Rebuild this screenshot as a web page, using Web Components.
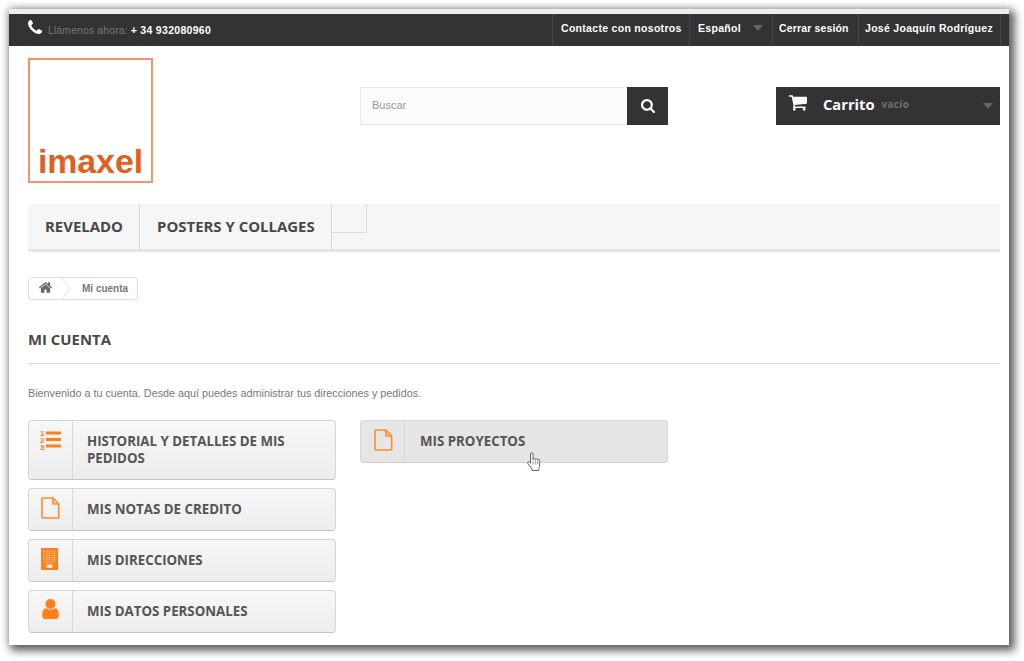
<!DOCTYPE html>
<html lang="es">
<head>
<meta charset="utf-8">
<title>Mi cuenta</title>
<style>
    html, body { margin: 0; background: #fff; }
    body { height: 661px; overflow: hidden; padding: 9px; box-sizing: border-box; font-family: "Liberation Sans", Arial, sans-serif; }
    .col { display: flex; flex-direction: column; gap: 8px; }
</style>
</head>
<body>
<shop-window>
    <top-bar></top-bar>
    <shop-header></shop-header>
    <main-menu></main-menu>
    <bread-crumb></bread-crumb>
    <page-heading>Mi cuenta</page-heading>
    <intro-text>Bienvenido a tu cuenta. Desde aquí puedes administrar tus direcciones y pedidos.</intro-text>
    <account-grid>
        <div class="col">
            <account-link icon="list" tall>Historial y detalles de mis pedidos</account-link>
            <account-link icon="file">Mis notas de credito</account-link>
            <account-link icon="building">Mis direcciones</account-link>
            <account-link icon="user">Mis datos personales</account-link>
        </div>
        <div class="col">
            <account-link icon="file" hover>Mis proyectos</account-link>
        </div>
    </account-grid>
</shop-window>

<script>
// grille de petits carres pour l'icone immeuble
let dots = ''
for (let r = 0; r < 6; r++) {
    for (let c = 0; c < 5; c++) {
        dots += `M${2.4 + c * 2.6} ${2.5 + r * 2.2}h1.400v1.300h-1.400z`
    }
}

const ICONS = {
    phone: `<svg viewBox="0 0 1408 1408" width="14" height="14"><path fill="#fff" d="M1408 1112q0 27-10 70.500t-21 68.500q-21 50-122 106-94 51-186 51-27 0-53-3.500t-57.500-12.500-47-14.500-55.500-20.500-49-18q-98-35-175-83-127-79-264-216t-216-264q-48-77-83-175-3-9-18-49t-20.500-55.500-14.500-47-12.500-57.500-3.500-53q0-92 51-186 56-101 106-122 25-11 68.500-21t70.500-10q14 0 21 3 18 6 53 76 11 19 30 54t35 63.500 31 53.500q3 4 17.500 25t21.500 35.500 7 28.500q0 20-28.500 50t-62 55-62 53-28.500 46q0 9 5 22.500t8.500 20.500 14 24 11.500 19q76 137 174 235t235 174q2 1 19 11.500t24 14 20.500 8.500 22.500 5q18 0 46-28.500t53-62 55-62 50-28.500q14 0 28.500 7t35.500 21.500 25 17.500q25 15 53.500 31t63.500 35 54 30q70 35 76 53 3 7 3 21z"/></svg>`,
    search: `<svg viewBox="64 128 1664 1664" width="14" height="14"><path fill="#fff" d="M1216 832q0-185-131.500-316.500t-316.500-131.500-316.500 131.500-131.500 316.500 131.500 316.500 316.500 131.500 316.500-131.500 131.500-316.500zm512 832q0 52-38 90t-90 38q-54 0-90-38l-343-342q-179 124-399 124-143 0-273.500-55.500t-225-150-150-225-55.500-273.500 55.500-273.500 150-225 225-150 273.500-55.500 273.500 55.500 225 150 150 225 55.500 273.500q0 220-124 399l343 343q37 37 37 90z"/></svg>`,
    cart: `<svg viewBox="0 256 1728 1408" width="19" height="16"><path fill="#fff" d="M704 1536q0 52-38 90t-90 38-90-38-38-90 38-90 90-38 90 38 38 90zm896 0q0 52-38 90t-90 38-90-38-38-90 38-90 90-38 90 38 38 90zm128-1088v512q0 24-16.500 42.500t-40.500 21.500l-1044 122q13 60 13 70 0 16-24 64h920q26 0 45 19t19 45-19 45-45 19h-1024q-26 0-45-19t-19-45q0-11 8-31.500t16-36 21.500-40 15.500-29.500l-177-823h-204q-26 0-45-19t-19-45 19-45 45-19h256q16 0 28.500 6.500t19.500 15.500 13 24.500 8 26 5.500 29.500 4.500 26h1201q26 0 45 19t19 45z"/></svg>`,
    home: `<svg viewBox="90 256 1610 1280" width="13" height="11"><path fill="#666" d="M1472 992v480q0 26-19 45t-45 19h-384v-384h-256v384h-384q-26 0-45-19t-19-45v-480q0-1 .5-3t.5-3l575-474 575 474q1 2 1 6zm223-69l-62 74q-8 9-21 11h-3q-13 0-21-7l-692-577-692 577q-12 8-24 7-13-2-21-11l-62-74q-8-10-7-23.500t11-21.500l719-599q32-26 76-26t76 26l244 204v-195q0-14 9-23t23-9h192q14 0 23 9t9 23v408l219 182q10 8 11 21.500t-7 23.500z"/></svg>`,
    list: `<svg viewBox="0 0 22 21" width="22" height="21"><g font-family="Liberation Sans, sans-serif" font-weight="700" font-size="8" fill="#ff7f1a"><text x="0" y="6.500">1</text><text x="0" y="13.500">2</text><text x="0" y="20.500">3</text></g><path fill="#ff7f1a" d="M6 2.500h15v3H6zM6 9h15v3H6zM6 15.500h15v3H6z"/></svg>`,
    file: `<svg viewBox="0 0 19 22" width="19" height="22"><path fill="none" stroke="#ff8a2b" stroke-width="1.600" stroke-linejoin="round" d="M1.800 1h10.200l5.700 6v13.200a.8.800 0 0 1-.8.800H1.800a.8.800 0 0 1-.8-.8V1.800a.8.800 0 0 1 .8-.8zM12 1v6h5.700"/></svg>`,
    building: `<svg viewBox="0 0 17 22" width="17" height="22"><path fill="#ff7f1a" d="M0 .5a.5.500 0 0 1 .5-.5h16a.5.500 0 0 1 .5.500v21a.5.500 0 0 1-.5.500H.5a.5.500 0 0 1-.5-.5z"/><path fill="#ffc79a" d="${dots}"/><path fill="#ffe9d8" d="M5.500 16.500h6v3.500h-6z"/></svg>`,
    user: `<svg viewBox="256 128 1280 1536" width="17" height="20"><path fill="#ff7f1a" d="M1536 1399q0 109-62.500 187t-150.500 78h-854q-88 0-150.500-78t-62.500-187q0-85 8.500-160.500t31.500-152 58.500-131 94-89 134.500-34.500q131 128 313 128t313-128q76 0 134.500 34.500t94 89 58.500 131 31.500 152 8.500 160.500zm-256-887q0 159-112.500 271.500t-271.500 112.500-271.500-112.500-112.500-271.500 112.500-271.500 271.500-112.500 271.500 112.500 112.500 271.500z"/></svg>`,
    hand: `<svg class="hand" width="15" height="19" viewBox="0 0 15 19"><path fill="#fff" stroke="#555" stroke-width=".9" stroke-linejoin="round" d="M3.500 2a1.250 1.250 0 0 1 2.500 0V7.500a1.100 1.100 0 0 1 2.300.3 1.100 1.100 0 0 1 2.200.4 1.100 1.100 0 0 1 2.200.6V13c0 2-.7 3-1 4v1.500H5V17C4 15.500 2.500 13.500.8 11.500c-.8-1 .5-2.300 1.500-1.500l1.200 1.200z"/><path fill="none" stroke="#777" stroke-width=".7" d="M6 8.500v4M8.300 8.500v4M10.500 8.700v3.800"/></svg>`
}

// petit helper pour eviter de repeter attachShadow partout
class ShopElement extends HTMLElement {
    constructor() {
        super()
        this.attachShadow({mode: 'open'}).innerHTML = this.build()
    }
    build() {
        return '<slot></slot>'
    }
}

class ShopWindow extends ShopElement {
    build() {
        return `<style>
            :host {
                display: block;
                width: 1000px;
                height: 636px;
                overflow: hidden;
                background: #fff;
                border-top: 5px solid #eeeeee;
                box-sizing: border-box;
                box-shadow: 4px 4px 8px 2px rgba(0,0,0,.55), 0 0 8px 1px rgba(0,0,0,.25);
            }
        </style><slot></slot>`
    }
}

class TopBar extends ShopElement {
    build() {
        return `<style>
            :host { display: flex; height: 32px; background: #333; color: #fff; padding-left: 19px; padding-right: 8px; font: 700 10.5px/28px "Liberation Sans", sans-serif; letter-spacing: .3px; }
            .call { display: flex; flex: 1; line-height: 32px; }
            .call svg { margin: 6px 6px 0 0; }
            .call span { color: #777; font-weight: 400; margin-right: 3px; letter-spacing: .1px; }
            a { display: block; height: 31px; border-left: 1px solid #454545; padding-left: 8px; white-space: nowrap; box-sizing: border-box; }
            a:last-child { border-right: 1px solid #454545; }
            i { display: inline-block; border: 5px solid transparent; border-top: 6px solid #666; border-bottom: 0; margin-left: 12px; vertical-align: 1px; }
        </style>
        <div class="call">${ICONS.phone}<span>Llámenos ahora:</span> + 34 932080960</div>
        <a style="width:137px">Contacte con nosotros</a>
        <a style="width:83px">Español<i></i></a>
        <a style="width:86px;padding-left:6px;letter-spacing:.15px">Cerrar sesión</a>
        <a style="width:143px;padding-left:6px">José Joaquín Rodríguez</a>`
    }
}

class ShopHeader extends ShopElement {
    build() {
        return `<style>
            :host { display: grid; grid-template-columns: 332px 416px 224px; padding: 12px 19px 21px; }
            .logo { width: 125px; height: 125px; box-sizing: border-box; border: 2px solid #f0956c; padding-bottom: 1px; display: flex; align-items: flex-end; justify-content: center; color: #e2601f; font: 700 33.800px/37px "Liberation Sans", sans-serif; }
            .search { display: flex; width: 308px; height: 38px; margin-top: 29px; }
            .input { width: 267px; box-sizing: border-box; background: #fbfbfb; border: 1px solid #e8e8e8; border-right: 0; padding-left: 11px; color: #9a9a9a; font: 11px/35px "Liberation Sans", sans-serif; }
            .go { width: 41px; background: #333; display: flex; align-items: center; justify-content: center; }
            .cart { height: 38px; margin-top: 29px; background: #333; color: #fff; display: flex; align-items: center; padding: 0 7px 4px 12px; box-sizing: border-box; }
            .cart b { font: 700 14.700px "Open Sans", sans-serif; margin-left: 16px; }
            .cart span { font: 700 10px "Open Sans", sans-serif; color: #6f6f6f; margin-left: 7px; flex: 1; letter-spacing: .3px; }
            .cart i { border: 5.500px solid transparent; border-top: 6px solid #666; border-bottom: 0; margin-top: 3px; }
            .cart svg { margin-top: -2px; }
        </style>
        <div class="logo">imaxel</div>
        <div class="search"><div class="input">Buscar</div><div class="go">${ICONS.search}</div></div>
        <div class="cart">${ICONS.cart}<b>Carrito</b><span>vacío</span><i></i></div>`
    }
}

class MainMenu extends ShopElement {
    build() {
        return `<style>
            :host { display: flex; margin: 0 9px 0 19px; height: 48px; box-sizing: border-box; background: #f6f6f6; border-bottom: 3px solid #e6e6e6; color: #484848; font: 700 14.950px/45px "Open Sans", sans-serif; }
            a { padding: 0 16px 0 17px; border-right: 1px solid #d6d6d6; margin-bottom: -3px; white-space: nowrap; }
            .empty { width: 35px; height: 29px; box-sizing: border-box; border-right: 1px solid #dcdcdc; border-bottom: 1px solid #dcdcdc; }
        </style>
        <a>REVELADO</a><a>POSTERS Y COLLAGES</a><div class="empty"></div>`
    }
}

class BreadCrumb extends ShopElement {
    build() {
        return `<style>
            :host { display: flex; width: 110px; height: 23px; box-sizing: border-box; margin: 25px 0 0 19px; border: 1px solid #dedede; border-radius: 3px; color: #777; font: 700 10px/21px "Liberation Sans", sans-serif; overflow: hidden; }
            .home { width: 33px; display: flex; justify-content: center; padding: 4px 0 0 0; position: relative; box-sizing: border-box; }
            .home::after { content: ""; position: absolute; right: -7px; top: 3px; width: 14px; height: 14px; border-top: 1px solid #e4e4e4; border-right: 1px solid #e4e4e4; transform: rotate(45deg) skew(8deg, 8deg); }
            .now { padding-left: 20px; white-space: nowrap; }
        </style>
        <div class="home">${ICONS.home}</div><div class="now">Mi cuenta</div>`
    }
}

class PageHeading extends ShopElement {
    build() {
        return `<style>
            :host { display: block; margin: 29px 9px 0 19px; height: 34px; border-bottom: 1px solid #dcdcdc; color: #484848; font: 700 14.900px/21px "Open Sans", sans-serif; text-transform: uppercase; }
        </style><slot></slot>`
    }
}

class IntroText extends ShopElement {
    build() {
        return `<style>
            :host { display: block; margin: 22px 9px 0 19px; color: #777; font: 10.800px/15px "Liberation Sans", sans-serif; }
        </style><slot></slot>`
    }
}

class AccountGrid extends ShopElement {
    build() {
        return `<style>
            :host { display: grid; grid-template-columns: 308px 308px; gap: 24px; margin: 19px 0 0 19px; }
        </style><slot></slot>`
    }
}

class AccountLink extends ShopElement {
    build() {
        const tall = this.hasAttribute('tall')
        const hover = this.hasAttribute('hover')
        const kind = this.getAttribute('icon')
        // decalages d'un pixel constates sur la capture
        const nudge = hover ? 'padding-left: 2px;' : kind === 'building' ? 'padding-right: 2px;' : ''
        return `<style>
            :host { display: flex; width: 308px; min-height: ${tall ? 60 : 43}px; box-sizing: border-box; border: 1px solid ${hover ? '#d8d8d8' : '#d6d6d6'}; border-bottom-color: ${hover ? '#d0d0d0' : '#c4c4c4'}; border-radius: 4px; color: #555; font: 700 13.300px/16.500px "Open Sans", sans-serif; text-transform: uppercase;
                background: ${hover ? '#e6e6e6' : 'linear-gradient(#f7f7f7, #ededed)'}; position: relative; }
            .ico { width: 44px; box-sizing: border-box; border-right: 1px solid #d8d8d8; display: flex; justify-content: center; padding-top: 8px; flex: none; ${nudge} }
            .txt { padding: 12px 24px 0 ${hover ? 15 : 14}px; }
            .hand { position: absolute; left: 166px; top: 31px; }
        </style>
        <div class="ico">${ICONS[kind]}</div><div class="txt"><slot></slot></div>
        ${hover ? ICONS.hand : ''}`
    }
}

customElements.define('shop-window', ShopWindow)
customElements.define('top-bar', TopBar)
customElements.define('shop-header', ShopHeader)
customElements.define('main-menu', MainMenu)
customElements.define('bread-crumb', BreadCrumb)
customElements.define('page-heading', PageHeading)
customElements.define('intro-text', IntroText)
customElements.define('account-grid', AccountGrid)
customElements.define('account-link', AccountLink)
</script>
</body>
</html>
